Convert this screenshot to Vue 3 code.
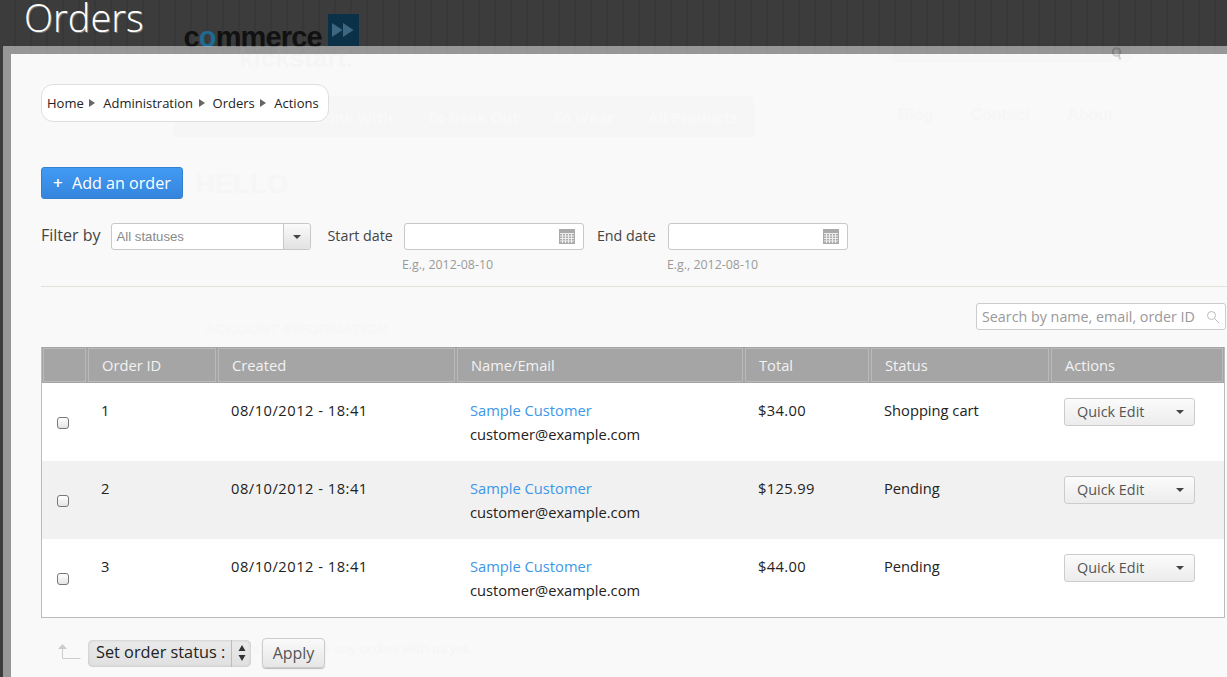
<script setup>
const crumbs = ['Home', 'Administration', 'Orders', 'Actions']

const orders = [
  { id: 1, created: '08/10/2012 - 18:41', total: '$34.00', status: 'Shopping cart' },
  { id: 2, created: '08/10/2012 - 18:41', total: '$125.99', status: 'Pending' },
  { id: 3, created: '08/10/2012 - 18:41', total: '$44.00', status: 'Pending' },
]

const dateFilters = ['Start date', 'End date']
</script>

<template>
  <div class="page">
    <!-- the storefront, nearly hidden behind the overlay -->
    <div class="backdrop">
      <div class="logo">
        <span class="logo-word">c<span class="logo-o">o</span>mmerce</span>
        <span class="logo-box">
          <svg width="22" height="14" viewBox="0 0 22 14"><path d="M0 0l10.500 7-10.500 7zM11 0l10.500 7-10.500 7z" fill="#3d6680" /></svg>
        </span>
      </div>
      <div class="ghost kick">kickstart.</div>
      <div class="ghost-nav">
        <span>Drink With</span><span>To Geek Out</span><span>To Wear</span><span>All Products</span>
      </div>
      <div class="ghost-links"><span>Blog</span><span>Contact</span><span>About</span></div>
      <div class="ghost-search">
        <span>Search</span>
        <svg width="11" height="13" viewBox="0 0 11 13" fill="none" stroke="rgba(0,0,0,.16)" stroke-width="2">
          <circle cx="5.500" cy="5" r="3.800" />
          <path d="M7.500 8.500l2 4" />
        </svg>
      </div>
      <div class="ghost hello">HELLO</div>
      <div class="ghost-small none">You don't have any orders with us yet.</div>
      <div class="ghost account">ACCOUNT INFORMATION</div>
    </div>

    <h1 class="title">Orders</h1>

    <div class="frame">
      <div class="panel">
        <div class="breadcrumb">
          <template v-for="(c, i) in crumbs" :key="c">
            <span>{{ c }}</span>
            <span v-if="i < crumbs.length - 1" class="sep"></span>
          </template>
        </div>

        <button class="add-btn"><span class="plus">+</span>Add an order</button>

        <div class="filters">
          <div class="filter-by">
            <label>Filter by</label>
            <div class="status-select">
              <span>All statuses</span>
              <i class="select-arrow"><b></b></i>
            </div>
          </div>
          <div v-for="f in dateFilters" :key="f" class="date-filter">
            <label>{{ f }}</label>
            <div class="date-col">
              <div class="date-input">
                <svg width="16" height="15" viewBox="0 0 16 15">
                  <rect width="16" height="15" fill="#aaa" />
                  <path d="M1 4.500h14M1 7h14M1 9.500h14M1 12h14M3.500 4v10M6.500 4v10M9.500 4v10M12.500 4v10" stroke="#eee" stroke-width="1" />
                </svg>
              </div>
              <div class="hint">E.g., 2012-08-10</div>
            </div>
          </div>
        </div>

        <div class="search-row">
          <div class="search">
            <span>Search by name, email, order ID</span>
            <svg width="14" height="14" viewBox="0 0 14 14" fill="none" stroke="#bbb" stroke-width="1">
              <circle cx="5.500" cy="5.500" r="4" />
              <path d="M8.500 8.500l4.500 4.500" />
            </svg>
          </div>
        </div>

        <table class="orders">
          <thead>
            <tr>
              <th class="c-check"></th>
              <th class="c-id">Order ID</th>
              <th class="c-created">Created</th>
              <th class="c-name">Name/Email</th>
              <th class="c-total">Total</th>
              <th class="c-status">Status</th>
              <th class="c-actions">Actions</th>
            </tr>
          </thead>
          <tbody>
            <tr v-for="o in orders" :key="o.id">
              <td class="check-cell"><span class="checkbox"></span></td>
              <td>{{ o.id }}</td>
              <td class="created">{{ o.created }}</td>
              <td><a class="customer">Sample Customer</a><br />customer@example.com</td>
              <td class="amount">{{ o.total }}</td>
              <td>{{ o.status }}</td>
              <td class="action-cell">
                <div class="quick-edit"><span>Quick Edit</span><b></b></div>
              </td>
            </tr>
          </tbody>
        </table>

        <div class="bulk">
          <svg class="bulk-arrow" width="24" height="17" viewBox="0 0 24 17">
            <path d="M4.500 4v11.500h18" fill="none" stroke="#ccc" stroke-width="1" />
            <path d="M0 6l4.500-5 4.500 5z" fill="#ccc" />
          </svg>
          <div class="native-select">
            <span class="native-label">Set order status :</span>
            <span class="native-arrows">
              <svg width="8" height="18" viewBox="0 0 8 18"><path d="M4 1l3.500 6h-7zM4 17l3.500-6h-7z" fill="#333" /></svg>
            </span>
          </div>
          <button class="apply">Apply</button>
        </div>
      </div>
    </div>
  </div>
</template>

<style scoped>
.page {
  position: relative;
  width: 1227px;
  height: 677px;
  overflow: hidden;
  font-family: "Open Sans", "Noto Sans", sans-serif;
  background: repeating-linear-gradient(90deg, #3c3c3c 0, #3c3c3c 14px, #383838 14px, #383838 16px);
  color: #222;
}

.title {
  position: relative;
  margin: 0;
  padding: 0 0 0 24px;
  height: 46px;
  font-size: 38px;
  line-height: 35px;
  font-weight: 300;
  color: #fff;
  text-shadow: 1px 1px 0 #777;
}

.backdrop {
  position: absolute;
  inset: 0;
}

.logo {
  position: absolute;
  left: 183.500px;
  top: 14px;
  display: flex;
  align-items: flex-start;
  gap: 6px;
}

.logo-word {
  margin-top: 9px;
  font-family: "Liberation Sans", sans-serif;
  font-weight: 700;
  font-size: 29px;
  line-height: 28px;
  letter-spacing: -0.85px;
  color: #111;
}

.logo-o {
  color: #1d6a94;
}

.logo-box {
  width: 31px;
  height: 32px;
  background: #0b3149;
  display: flex;
  justify-content: center;
  padding-top: 9px;
  box-sizing: border-box;
}

.frame {
  position: absolute;
  left: 3px;
  top: 46px;
  right: 0;
  bottom: 0;
  padding: 8px 0 0 8px;
  background: rgba(255, 255, 255, 0.47);
}

.panel {
  height: 100%;
  box-sizing: border-box;
  padding: 30px 0 0 30px;
  background: #f9f9f9;
  position: relative;
}

/* faint leftovers of the page below the overlay */
.ghost {
  position: absolute;
  z-index: 3;
  font-family: "Liberation Sans", sans-serif;
  font-weight: 700;
  color: #f5f5f5;
}

.kick {
  left: 239px;
  top: 46px;
  font-size: 26px;
  line-height: 24px;
  color: rgba(200, 200, 200, 0.08);
}

.hello {
  left: 195px;
  top: 169px;
  font-size: 27.500px;
  line-height: 30px;
  color: #f6f6f6;
}

.account {
  left: 204px;
  top: 320px;
  font-size: 15px;
  line-height: 18px;
  color: #f7f7f7;
}

.ghost-nav {
  position: absolute;
  z-index: 3;
  left: 174px;
  top: 96px;
  width: 580px;
  height: 41px;
  box-sizing: border-box;
  padding-left: 138px;
  background: #f6f6f6;
  border-radius: 3px;
  display: flex;
  gap: 34px;
  align-items: center;
  font-size: 15px;
  font-weight: 700;
  color: #f9f9f9;
}

.ghost-links {
  position: absolute;
  z-index: 3;
  left: 898px;
  top: 106px;
  display: flex;
  gap: 37px;
  font-family: "Liberation Sans", sans-serif;
  font-size: 16px;
  line-height: 18px;
  font-weight: 700;
  color: #f6f6f6;
}

.ghost-search {
  position: absolute;
  z-index: 3;
  left: 892px;
  top: 43px;
  width: 239px;
  height: 19px;
  box-sizing: border-box;
  display: flex;
  justify-content: space-between;
  padding: 3px 8px 0 5px;
  background: rgba(0, 0, 0, 0.006);
  border: 1px solid rgba(0, 0, 0, 0.008);
  border-radius: 3px;
  font-size: 15px;
  line-height: 18px;
  color: rgba(0, 0, 0, 0.02);
}

.ghost-small {
  position: absolute;
  z-index: 3;
  font-size: 13px;
  color: #f5f5f5;
}

.none {
  left: 241px;
  top: 639px;
}

.breadcrumb {
  position: relative;
  z-index: 4;
  display: inline-flex;
  align-items: center;
  box-sizing: border-box;
  height: 38px;
  padding: 0 9.500px 0 5px;
  background: #fff;
  border: 1px solid #dedede;
  border-radius: 12px;
  font-size: 13px;
  color: #222;
}

.sep {
  width: 0;
  height: 0;
  margin: 0 8px 0 5.500px;
  border-left: 6px solid #666;
  border-top: 4px solid transparent;
  border-bottom: 4px solid transparent;
}

.add-btn {
  position: relative;
  z-index: 4;
  display: block;
  width: 142px;
  height: 32px;
  margin-top: 45px;
  padding: 0 0 2px 11px;
  text-align: left;
  font-family: inherit;
  font-size: 16.100px;
  color: #fff;
  background: linear-gradient(#429bf3, #3584dd);
  border: 1px solid #337fd0;
  border-radius: 3px;
}

.plus {
  display: inline-block;
  width: 19px;
  font-size: 17px;
  font-weight: 600;
}

.filters {
  position: relative;
  z-index: 4;
  display: flex;
  align-items: flex-start;
  margin-top: 24px;
  height: 63px;
  border-bottom: 1px solid #e2e2da;
  width: 1186px;
}

.filter-by {
  display: flex;
  align-items: center;
  gap: 10px;
  height: 27px;
  font-size: 16px;
  color: #444;
}

.filter-by label {
  padding-bottom: 3px;
}

.status-select {
  display: flex;
  align-items: center;
  justify-content: space-between;
  box-sizing: border-box;
  width: 200px;
  height: 27px;
  padding-left: 5px;
  background: #fff;
  border: 1px solid #c8c8c8;
  border-radius: 3px;
  font-family: "Liberation Sans", sans-serif;
  font-size: 13.200px;
  color: #8a8a8a;
}

.select-arrow {
  display: flex;
  align-items: center;
  justify-content: center;
  width: 26px;
  height: 25px;
  background: linear-gradient(#fafafa, #e2e2e2);
  border-left: 1px solid #c8c8c8;
  border-radius: 0 3px 3px 0;
}

.select-arrow b,
.quick-edit b {
  width: 0;
  height: 0;
  border-top: 4px solid #444;
  border-left: 4px solid transparent;
  border-right: 4px solid transparent;
}

.date-filter {
  display: flex;
  align-items: flex-start;
  gap: 11px;
  margin-left: 17px;
  font-size: 14.300px;
  color: #444;
}

.date-filter + .date-filter {
  gap: 12px;
  margin-left: 13px;
}

.date-filter + .date-filter .hint {
  margin-left: -1px;
}

.date-filter label {
  line-height: 26px;
}

.date-input {
  display: flex;
  align-items: center;
  justify-content: flex-end;
  box-sizing: border-box;
  width: 180px;
  height: 27px;
  padding-right: 8px;
  background: #fff;
  border: 1px solid #c8c8c8;
  border-radius: 3px;
}

.hint {
  margin: 6px 0 0 -2px;
  font-size: 12.400px;
  line-height: 17px;
  color: #999;
}

.search-row {
  position: relative;
  z-index: 4;
  display: flex;
  justify-content: flex-end;
  padding: 16px 0 17px;
  width: 1185px;
}

.search {
  display: flex;
  align-items: center;
  justify-content: space-between;
  box-sizing: border-box;
  width: 250px;
  height: 27px;
  padding: 0 5px;
  background: #fff;
  border: 1px solid #ccc;
  border-radius: 3px;
  font-size: 14.300px;
  color: #999;
  white-space: nowrap;
}

.orders {
  position: relative;
  z-index: 4;
  width: 1184px;
  border-collapse: separate;
  border-spacing: 0;
  table-layout: fixed;
  background: #fff;
  border-left: 1px solid #bbb;
  border-right: 1px solid #bbb;
  border-bottom: 1px solid #bbb;
  font-size: 14.700px;
  color: #222;
}

.orders th {
  height: 36px;
  box-sizing: border-box;
  padding: 0 0 0 14px;
  background: #a5a5a5;
  border: 1px solid #a5a5a5;
  box-shadow: inset 0 0 0 1px #b9b9b9;
  font-weight: 400;
  text-align: left;
  color: #f2f2f2;
}

.c-check { width: 45px; }
.c-id { width: 130px; }
.c-created { width: 239px; }
.c-name { width: 288px; }
.c-total { width: 126px; }
.c-status { width: 180px; }

.orders td {
  height: 78px;
  box-sizing: border-box;
  padding: 15px 0 0 14px;
  vertical-align: top;
  line-height: 24px;
}

.orders td.created {
  letter-spacing: 0.5px;
}

.orders td.amount {
  letter-spacing: 0.35px;
}

.orders tbody tr:nth-child(even) td {
  background: #f1f1f1;
}

.orders td.check-cell {
  padding: 34px 0 0 15px;
}

.checkbox {
  display: block;
  width: 10px;
  height: 10px;
  background: linear-gradient(#fff, #e4e4e4);
  border: 1px solid #777;
  border-radius: 3px;
}

.customer {
  color: #3d97e8;
}

.quick-edit {
  display: flex;
  align-items: center;
  justify-content: space-between;
  box-sizing: border-box;
  width: 131px;
  height: 28px;
  padding: 0 10px 0 12px;
  background: linear-gradient(#fbfbfb, #ececec);
  border: 1px solid #ccc;
  border-radius: 3px;
  font-size: 14.400px;
  color: #555;
}

.bulk {
  position: relative;
  z-index: 4;
  display: flex;
  align-items: center;
  margin: 20px 0 0 17px;
}

.bulk-arrow {
  margin: -4px 6px 0 0;
}

.native-select {
  display: flex;
  align-items: center;
  box-sizing: border-box;
  width: 163px;
  height: 27px;
  background: linear-gradient(#eaeaea, #e0e0e0);
  border-radius: 5px;
  box-shadow: inset 0 0 3px #bbb;
  font-size: 16.300px;
  color: #222;
}

.native-label {
  width: 143px;
  padding: 0 0 2px 8px;
  box-sizing: border-box;
  white-space: nowrap;
}

.native-arrows {
  display: flex;
  justify-content: center;
  flex: 1;
  height: 27px;
  align-items: center;
  border-left: 1px solid #bbb;
}

.apply {
  width: 63px;
  height: 30px;
  margin-left: 11px;
  padding: 0;
  font-family: inherit;
  font-size: 16px;
  color: #555;
  background: linear-gradient(#fafafa, #e6e6e6);
  border: 1px solid #ccc;
  border-radius: 4px;
  box-shadow: 0 1px 1px #bbb;
}
</style>
